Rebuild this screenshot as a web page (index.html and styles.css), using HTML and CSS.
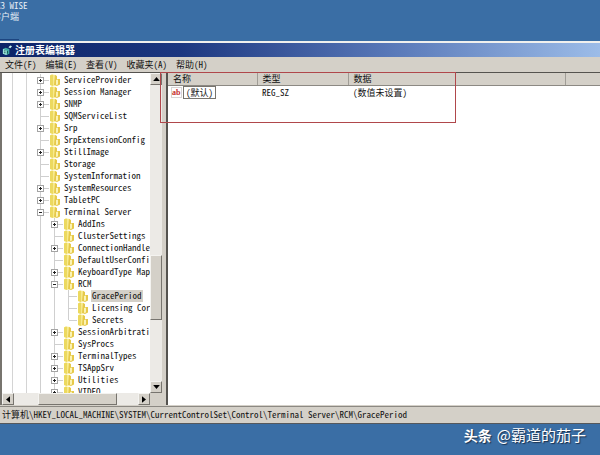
FILE: index.html
```html
<!DOCTYPE html>
<html lang="zh-CN">
<head>
<meta charset="utf-8">
<title>注册表编辑器</title>
<link rel="stylesheet" href="styles.css">
</head>
<body>
<svg class="defs" aria-hidden="true">
  <symbol id="folder" viewBox="0 0 12 12">
    <path d="M1 1.500 L3 0.500 L7 1 V11 L4 12 L1 11Z" fill="#f7ea8e"/>
    <path d="M1 1.500 L3 0.500 L4 1 V12 L1 11Z" fill="#ecd95f"/>
    <path d="M6 1 L8 2 V5 L11 5 V10.500 L8 12 L5 11Z" fill="#e6c94a"/>
    <path d="M7 6 L9 5.500 V10.500 L7 11Z" fill="#fbf3b4"/>
  </symbol>
  <symbol id="plus" viewBox="0 0 7 7">
    <rect x=".5" y=".5" width="6" height="6" fill="#fff" stroke="#a4a4a4"/>
    <path d="M2 3.500H5M3.500 2V5" stroke="#222"/>
  </symbol>
  <symbol id="minus" viewBox="0 0 7 7">
    <rect x=".5" y=".5" width="6" height="6" fill="#fff" stroke="#a4a4a4"/>
    <path d="M2 3.500H5" stroke="#222"/>
  </symbol>
</svg>

<header class="desktop-label">
  <div class="label-line">K3 WISE</div>
  <div class="label-line label-client">客户端</div>
</header>

<main class="window">
  <div class="titlebar">
    <svg class="app-icon" viewBox="0 0 12 12" aria-hidden="true">
      <path d="M1 5 L4 3.500 L8 5 V10 L5 11.500 L1 10Z" fill="#3fa9a5"/>
      <path d="M1 5 L5 6.500 V11.500 L1 10Z" fill="#a8eee6"/>
      <path d="M2 7H4M2 9H4M6 7V10" stroke="#15524f"/>
      <path d="M7 3 L9 1 L11 2 L9 4Z" fill="#c9f5ee"/>
    </svg>
    <h1 class="title">注册表编辑器</h1>
  </div>

  <nav class="menubar">
    <button class="menu">文件(F)</button>
    <button class="menu">编辑(E)</button>
    <button class="menu">查看(V)</button>
    <button class="menu">收藏夹(A)</button>
    <button class="menu">帮助(H)</button>
  </nav>

  <div class="content">
    <section class="tree-pane">
      <ul class="tree level-1">
        <li><div class="row"><svg class="toggle"><use href="#plus"/></svg><svg class="folder"><use href="#folder"/></svg><span class="name">ServiceProvider</span></div></li>
        <li><div class="row"><svg class="toggle"><use href="#plus"/></svg><svg class="folder"><use href="#folder"/></svg><span class="name">Session Manager</span></div></li>
        <li><div class="row"><svg class="toggle"><use href="#plus"/></svg><svg class="folder"><use href="#folder"/></svg><span class="name">SNMP</span></div></li>
        <li><div class="row"><svg class="toggle"></svg><svg class="folder"><use href="#folder"/></svg><span class="name">SQMServiceList</span></div></li>
        <li><div class="row"><svg class="toggle"><use href="#plus"/></svg><svg class="folder"><use href="#folder"/></svg><span class="name">Srp</span></div></li>
        <li><div class="row"><svg class="toggle"></svg><svg class="folder"><use href="#folder"/></svg><span class="name">SrpExtensionConfig</span></div></li>
        <li><div class="row"><svg class="toggle"><use href="#plus"/></svg><svg class="folder"><use href="#folder"/></svg><span class="name">StillImage</span></div></li>
        <li><div class="row"><svg class="toggle"></svg><svg class="folder"><use href="#folder"/></svg><span class="name">Storage</span></div></li>
        <li><div class="row"><svg class="toggle"></svg><svg class="folder"><use href="#folder"/></svg><span class="name">SystemInformation</span></div></li>
        <li><div class="row"><svg class="toggle"><use href="#plus"/></svg><svg class="folder"><use href="#folder"/></svg><span class="name">SystemResources</span></div></li>
        <li><div class="row"><svg class="toggle"><use href="#plus"/></svg><svg class="folder"><use href="#folder"/></svg><span class="name">TabletPC</span></div></li>
        <li><div class="row"><svg class="toggle"><use href="#minus"/></svg><svg class="folder"><use href="#folder"/></svg><span class="name">Terminal Server</span></div>
          <ul class="tree">
            <li><div class="row"><svg class="toggle"><use href="#plus"/></svg><svg class="folder"><use href="#folder"/></svg><span class="name">AddIns</span></div></li>
            <li><div class="row"><svg class="toggle"></svg><svg class="folder"><use href="#folder"/></svg><span class="name">ClusterSettings</span></div></li>
            <li><div class="row"><svg class="toggle"><use href="#plus"/></svg><svg class="folder"><use href="#folder"/></svg><span class="name">ConnectionHandler</span></div></li>
            <li><div class="row"><svg class="toggle"></svg><svg class="folder"><use href="#folder"/></svg><span class="name">DefaultUserConfig</span></div></li>
            <li><div class="row"><svg class="toggle"><use href="#plus"/></svg><svg class="folder"><use href="#folder"/></svg><span class="name">KeyboardType Mapping</span></div></li>
            <li><div class="row"><svg class="toggle"><use href="#minus"/></svg><svg class="folder"><use href="#folder"/></svg><span class="name">RCM</span></div>
              <ul class="tree">
                <li><div class="row"><svg class="toggle"></svg><svg class="folder"><use href="#folder"/></svg><span class="name selected">GracePeriod</span></div></li>
                <li><div class="row"><svg class="toggle"></svg><svg class="folder"><use href="#folder"/></svg><span class="name">Licensing Core</span></div></li>
                <li><div class="row"><svg class="toggle"></svg><svg class="folder"><use href="#folder"/></svg><span class="name">Secrets</span></div></li>
              </ul>
            </li>
            <li><div class="row"><svg class="toggle"><use href="#plus"/></svg><svg class="folder"><use href="#folder"/></svg><span class="name">SessionArbitration</span></div></li>
            <li><div class="row"><svg class="toggle"></svg><svg class="folder"><use href="#folder"/></svg><span class="name">SysProcs</span></div></li>
            <li><div class="row"><svg class="toggle"><use href="#plus"/></svg><svg class="folder"><use href="#folder"/></svg><span class="name">TerminalTypes</span></div></li>
            <li><div class="row"><svg class="toggle"><use href="#plus"/></svg><svg class="folder"><use href="#folder"/></svg><span class="name">TSAppSrv</span></div></li>
            <li><div class="row"><svg class="toggle"><use href="#plus"/></svg><svg class="folder"><use href="#folder"/></svg><span class="name">Utilities</span></div></li>
            <li><div class="row"><svg class="toggle"><use href="#plus"/></svg><svg class="folder"><use href="#folder"/></svg><span class="name">VIDEO</span></div></li>
          </ul>
        </li>
      </ul>
      <div class="scroll vertical">
        <button class="arrow" aria-label="向上滚动"><svg class="glyph" viewBox="0 0 5 3"><path d="M0 3 L2.500 0 L5 3Z"/></svg></button>
        <div class="track-before"></div>
        <div class="thumb"></div>
        <div class="track-after"></div>
        <button class="arrow" aria-label="向下滚动"><svg class="glyph" viewBox="0 0 5 3"><path d="M0 0 H5 L2.500 3Z"/></svg></button>
      </div>
      <div class="scroll horizontal">
        <button class="arrow" aria-label="向左滚动"><svg class="glyph side" viewBox="0 0 3 5"><path d="M3 0 V5 L0 2.500Z"/></svg></button>
        <div class="track-before"></div>
        <div class="thumb"></div>
        <div class="track-after"></div>
        <button class="arrow" aria-label="向右滚动"><svg class="glyph side" viewBox="0 0 3 5"><path d="M0 0 V5 L3 2.500Z"/></svg></button>
      </div>
    </section>

    <section class="list-pane">
      <table class="values">
        <colgroup><col class="col-name"><col class="col-type"><col class="col-data"><col></colgroup>
        <thead><tr><th>名称</th><th>类型</th><th>数据</th><th></th></tr></thead>
        <tbody>
          <tr>
            <td><div class="value-name"><span class="string-icon">ab</span><span class="focused">(默认)</span></div></td>
            <td>REG_SZ</td>
            <td>(数值未设置)</td>
            <td></td>
          </tr>
        </tbody>
      </table>
    </section>
    <div class="highlight"></div>
  </div>

  <footer class="status">计算机\HKEY_LOCAL_MACHINE\SYSTEM\CurrentControlSet\Control\Terminal Server\RCM\GracePeriod</footer>
</main>

<div class="watermark"><b class="brand">头条</b><span>@霸道的茄子</span></div>
</body>
</html>
```
FILE: styles.css
```css
* { box-sizing: border-box; }

body {
  margin: 0;
  height: 100vh;
  display: grid;
  grid-template-rows: 41px minmax(0, 1fr) 31px;
  overflow: hidden;
  background: #3a6ea5;
  color: #111;
  font: 500 9px/12px "Noto Sans Mono CJK SC", "Noto Sans CJK SC", monospace;
}

button {
  margin: 0;
  padding: 0;
  border: 0;
  background: none;
  color: inherit;
  font: inherit;
}

.defs { position: absolute; width: 0; height: 0; }

.desktop-label {
  color: #e6eef6;
  line-height: 11px;
  background: linear-gradient(#1d4580, #1d4580) left 39px / 19px 1px no-repeat;
}
.label-line { margin-left: -4px; white-space: nowrap; }
.label-client { margin-left: -8px; }

.window {
  display: flex;
  flex-direction: column;
  min-width: 0;
  background: #d4d0c8;
  border-top: 2px solid #f0f0ee;
  border-bottom: 1px solid #55585c;
}

.titlebar {
  display: flex;
  align-items: center;
  gap: 2px;
  height: 14px;
  padding-left: 2px;
  background: linear-gradient(90deg, #0c2468, #1c3780 30%, #5878b8 65%, #9cbce8);
}
.app-icon { width: 11px; height: 12px; }
.title {
  margin: 0;
  color: #fff;
  font-size: 10px;
  line-height: 14px;
  font-weight: 700;
}

.menubar { display: flex; gap: 9px; padding: 2px 5px; height: 15px; }
.menu { line-height: 12px; }

.content {
  position: relative;
  flex: 1;
  min-height: 0;
  display: grid;
  grid-template-columns: 162px minmax(0, 1fr);
  column-gap: 4px;
  border-top: 1px solid #55534f;
}

.tree-pane {
  display: grid;
  grid-template: minmax(0, 1fr) 12px / minmax(0, 1fr) 12px;
  min-height: 0;
  border-left: 2px solid #77746e;
  background: #d4d0c8;
}

.tree { margin: 0; padding: 0 0 0 14px; list-style: none; }
.level-1 {
  overflow: hidden;
  padding-left: 35px;
  padding-top: 1px;
  background:
    linear-gradient(#d4d4d4, #d4d4d4) 10px 0 / 1px 100% no-repeat,
    linear-gradient(#d4d4d4, #d4d4d4) 24px 0 / 1px 100% no-repeat,
    #fff;
}
.tree li {
  background: linear-gradient(#cfcfcf, #cfcfcf) 3px 0 / 1px 100% no-repeat;
}
.tree .tree .tree > li:last-child {
  background-size: 1px 6px;
}
.row {
  display: flex;
  align-items: center;
  height: 12px;
  background: linear-gradient(#cfcfcf, #cfcfcf) 4px 6px / 8px 1px no-repeat;
}
.toggle { flex: none; width: 7px; height: 7px; margin-right: 5px; }
.folder { flex: none; width: 12px; height: 12px; margin-right: 2px; }
.name { padding: 0 1px; white-space: nowrap; }
.selected { background: #d4d0c8; }

.scroll { display: flex; background: #eceae6; }
.vertical { flex-direction: column; }
.horizontal { grid-column: 1; }
.arrow {
  flex: none;
  display: grid;
  place-items: center;
  width: 12px;
  height: 12px;
}
.arrow, .thumb {
  background: #d4d0c8;
  border: 1px solid;
  border-color: #f4f3f0 #77746e #77746e #f4f3f0;
}
.glyph { width: 7px; height: 4px; }
.side { width: 4px; height: 7px; }
.vertical .track-before { flex: 171; }
.vertical .thumb { flex: 63; }
.vertical .track-after { flex: 61; }
.horizontal .track-before { flex: 24; }
.horizontal .thumb { flex: 79; }
.horizontal .track-after { flex: 21; }

.list-pane { background: #fff; border-left: 2px solid #55534f; min-width: 0; }
.values { width: 100%; border-collapse: collapse; table-layout: fixed; }
.col-name { width: 89px; }
.col-type { width: 91px; }
.col-data { width: 217px; }
.values th {
  height: 12px;
  padding: 0 5px;
  background: #d4d0c8;
  border-right: 1px solid #a09d96;
  border-bottom: 1px solid #8c8983;
  font-weight: 500;
  text-align: left;
}
.values th:last-child { border-right: 0; }
.values td { padding: 0 5px; height: 12px; white-space: nowrap; }
.values td:first-child { padding: 0 3px; }
.value-name { display: flex; align-items: center; }
.string-icon {
  width: 11px;
  border: 1px solid #d8d4d4;
  color: #c4302b;
  font: 700 8px/9px "Liberation Serif", serif;
}
.focused { border: 1px solid #77746e; padding: 0 2px; margin-left: 1px; line-height: 11px; }

.highlight {
  position: absolute;
  left: 160px;
  top: -1px;
  width: 296px;
  height: 51px;
  border: 1px solid #b0474b;
}

.status {
  height: 17px;
  margin-top: 1px;
  padding: 2px;
  border-top: 1px solid #8c8983;
  white-space: nowrap;
}

.watermark {
  display: flex;
  align-items: center;
  justify-content: flex-end;
  gap: 5px;
  padding: 0 14px 10px 0;
  color: #fff;
  font: 400 15px/20px "Noto Sans CJK SC", sans-serif;
  text-shadow: 1px 1px 1px #1b2f4a;
}
.brand { font-size: 14px; }
```
